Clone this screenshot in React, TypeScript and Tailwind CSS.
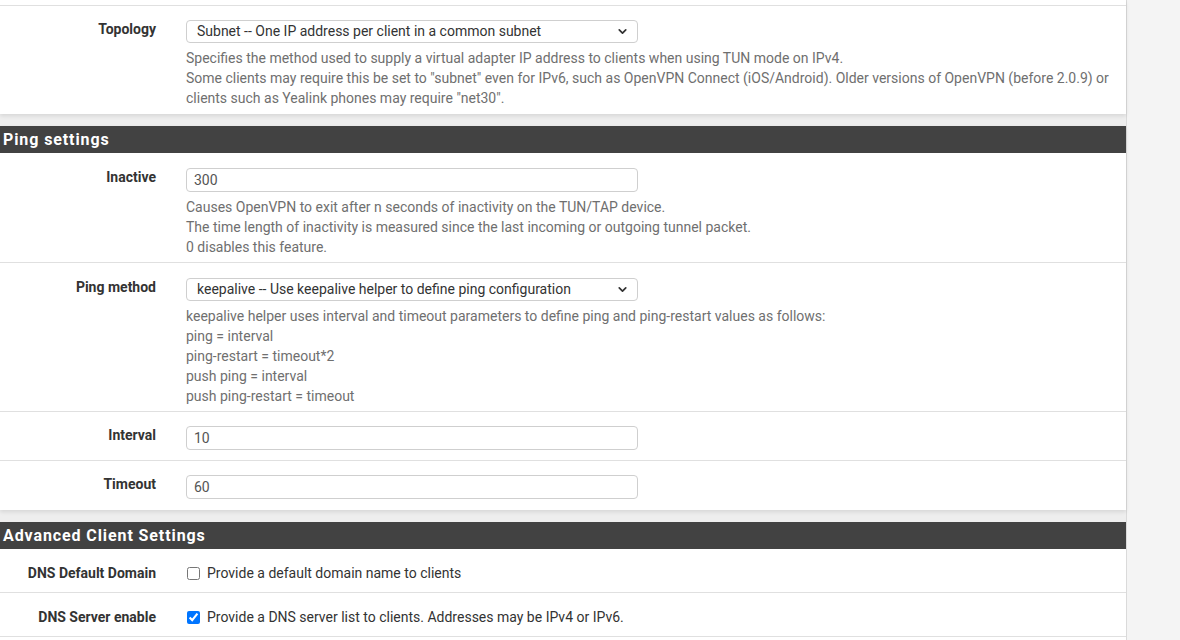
import React from 'react';
import { ChevronDown } from 'lucide-react';

const font = { fontFamily: 'Roboto, "Noto Sans", Arial, sans-serif' };

const Label = ({ text }: { text: string }) => (
  <div className="w-[156px] shrink-0 text-right text-[14px] leading-5 font-bold text-[#333] mt-[-1px]">
    {text}
  </div>
);

const Help = ({ lines }: { lines: string[] }) => (
  <div className="mt-[5px] text-[14px] leading-5 text-[#6f6f6f]">
    {lines.map((l, i) => (
      <div key={i}>{l}</div>
    ))}
  </div>
);

const Select = ({ value }: { value: string }) => (
  <div className="w-[452px] h-[23px] rounded-[4px] border border-[#cfcfcf] bg-white flex items-center justify-between pl-[10px] pr-[8px] text-[14px] text-[#333]">
    <span>{value}</span>
    <ChevronDown size={13} strokeWidth={3.2} className="text-[#333]" />
  </div>
);

const Input = ({ value }: { value: string }) => (
  <div className="w-[452px] h-[24px] rounded-[4px] border border-[#cfcfcf] bg-white flex items-center pl-[7px] text-[14px] text-[#555]">
    {value}
  </div>
);

const Header = ({ title }: { title: string }) => (
  <div className="h-[27px] bg-[#424242] text-white font-bold text-[16px] tracking-[0.9px] flex items-center pl-[3px]">
    {title}
  </div>
);

const FieldRow = ({
  label,
  control,
  help,
  last,
  top = 'pt-[15px]',
  bottom,
}: {
  label: string;
  control: React.ReactNode;
  help?: string[];
  last?: boolean;
  top?: string;
  bottom?: string;
}) => (
  <div
    className={`flex ${top} ${bottom ?? (help ? 'pb-[5px]' : 'pb-[10px]')} ${
      last ? '' : 'border-b border-[#e0e0e0]'
    }`}
  >
    <Label text={label} />
    <div className="ml-[30px] flex-1 pr-4">
      {control}
      {help && <Help lines={help} />}
    </div>
  </div>
);

const CheckRow = ({ label, text, checked, last }: { label: string; text: string; checked: boolean; last?: boolean }) => (
  <div className={`flex items-center pt-[14px] pb-[9px] ${last ? '' : 'border-b border-[#e0e0e0]'}`}>
    <div className="w-[156px] shrink-0 text-right text-[14px] leading-5 font-bold text-[#333]">{label}</div>
    <div className="ml-[31px] flex items-center text-[14px] leading-5 text-[#333]">
      <input type="checkbox" defaultChecked={checked} className="w-[13px] h-[13px] m-0 accent-[#0075ff]" />
      <span className="ml-[7px]">{text}</span>
    </div>
  </div>
);

export default function App() {
  return (
    <div className="w-[1180px] h-[640px] overflow-hidden flex bg-[#f4f4f4]" style={font}>
      <div className="w-[1127px] shrink-0 border-r border-[#dadada] bg-[#eeeeee]">
        {/* Tunnel settings (tail) */}
        <div className="bg-white shadow-[0_2px_4px_rgba(0,0,0,0.10)]">
          <div className="h-[6px] border-b border-[#e0e0e0]" />
          <FieldRow
            last
            top="pt-[14px]"
            bottom="pb-[6px]"
            label="Topology"
            control={<Select value="Subnet -- One IP address per client in a common subnet" />}
            help={[
              'Specifies the method used to supply a virtual adapter IP address to clients when using TUN mode on IPv4.',
              'Some clients may require this be set to "subnet" even for IPv6, such as OpenVPN Connect (iOS/Android). Older versions of OpenVPN (before 2.0.9) or',
              'clients such as Yealink phones may require "net30".',
            ]}
          />
        </div>

        {/* Ping settings */}
        <div className="mt-[12px] bg-white shadow-[0_2px_4px_rgba(0,0,0,0.10)]">
          <Header title="Ping settings" />
          <FieldRow
            label="Inactive"
            control={<Input value="300" />}
            help={[
              'Causes OpenVPN to exit after n seconds of inactivity on the TUN/TAP device.',
              'The time length of inactivity is measured since the last incoming or outgoing tunnel packet.',
              '0 disables this feature.',
            ]}
          />
          <FieldRow
            label="Ping method"
            control={<Select value="keepalive -- Use keepalive helper to define ping configuration" />}
            help={[
              'keepalive helper uses interval and timeout parameters to define ping and ping-restart values as follows:',
              'ping = interval',
              'ping-restart = timeout*2',
              'push ping = interval',
              'push ping-restart = timeout',
            ]}
          />
          <FieldRow top="pt-[14px]" label="Interval" control={<Input value="10" />} />
          <FieldRow top="pt-[14px]" bottom="pb-[11px]" last label="Timeout" control={<Input value="60" />} />
        </div>

        {/* Advanced Client Settings */}
        <div className="mt-[12px] bg-white">
          <Header title="Advanced Client Settings" />
          <CheckRow label="DNS Default Domain" text="Provide a default domain name to clients" checked={false} />
          <CheckRow label="DNS Server enable" text="Provide a DNS server list to clients. Addresses may be IPv4 or IPv6." checked />
          <div className="h-[20px]" />
        </div>
      </div>
      <div className="flex-1" />
    </div>
  );
}
